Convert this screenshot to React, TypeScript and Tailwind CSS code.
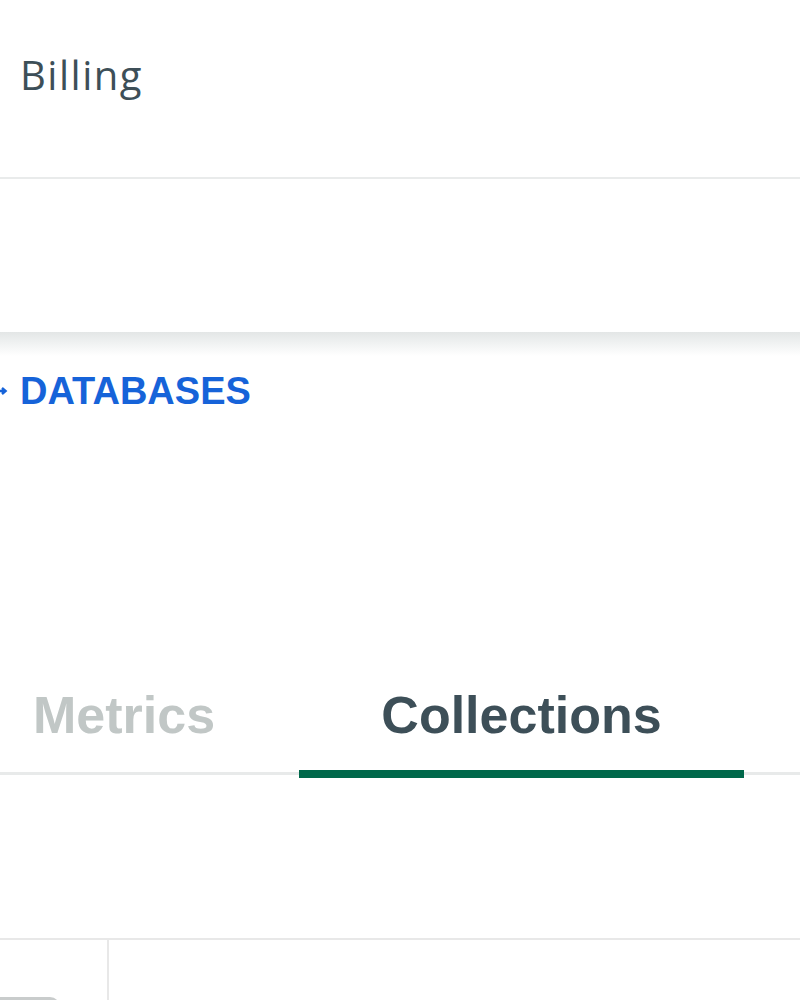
export default function App() {
  return (
    <div className="w-[800px] h-[1000px] bg-white overflow-hidden font-['Liberation_Sans',Arial,sans-serif]">
      {/* top nav */}
      <div className="h-[179px] border-b-2 border-[#e9ebeb] pt-[55px] pl-[20px]">
        <span className="font-['Open_Sans',sans-serif] text-[40px] leading-[40px] tracking-[1.5px] text-[#3d4f58]">
          Billing
        </span>
      </div>

      <div className="h-[153px]" />

      {/* header shadow */}
      <div className="h-[24px] bg-gradient-to-b from-[#e3e6e6] via-[#f1f3f3] to-white" />

      {/* breadcrumb */}
      <div className="flex items-center pt-[16px]">
        <svg width="8" height="12" viewBox="0 0 8 12" className="mr-[12px]">
          <path d="M-4 6 H5 M2 3 L5.5 6 L2 9" stroke="#1663d9" strokeWidth="2.5" fill="none" />
        </svg>
        <span className="text-[38px] leading-[38px] font-bold text-[#1663d9]">DATABASES</span>
      </div>

      {/* tabs */}
      <div className="mt-[279px] flex border-b-[3px] border-[#e8eaea]">
        <div className="w-[299px] pl-[33px] pb-[31px]">
          <span className="text-[52px] leading-[52px] font-bold text-[#c1c7c6]">Metrics</span>
        </div>
        <div className="relative w-[445px] pb-[31px] text-center">
          <span className="text-[52px] leading-[52px] font-bold text-[#3d4f58]">Collections</span>
          <div className="absolute left-0 right-0 bottom-[-6px] h-[8px] bg-[#00684a]" />
        </div>
      </div>

      <div className="h-[163px]" />

      {/* table */}
      <div className="flex border-t-2 border-[#e8e8e8] h-[200px]">
        <div className="w-[109px] border-r-2 border-[#e8e8e8] pt-[57px]">
          <div className="w-[60px] h-[20px] border-t-[3px] border-r border-[#c9cccc] rounded-tr-[10px]" />
        </div>
        <div className="flex-1" />
      </div>
    </div>
  );
}
